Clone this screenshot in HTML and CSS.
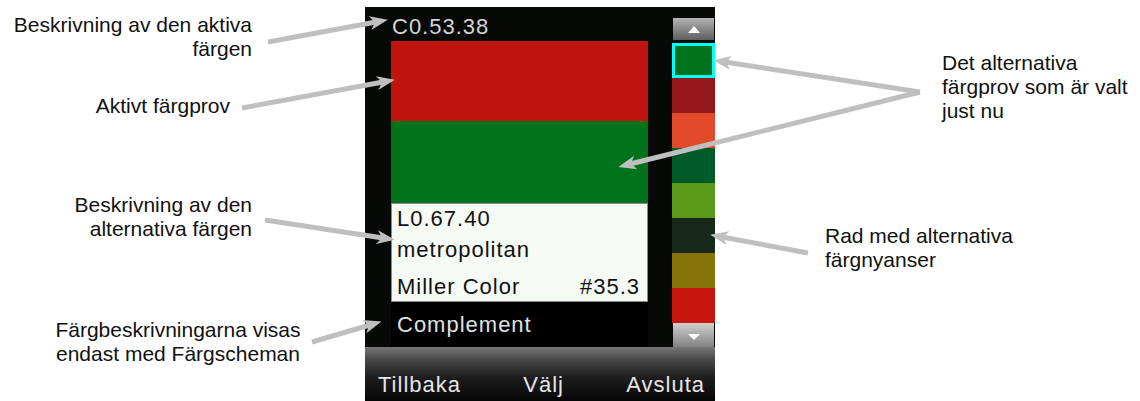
FILE: index.html
```html
<!DOCTYPE html>
<html lang="sv">
<head>
    <meta charset="UTF-8">
    <meta name="viewport" content="width=device-width, initial-scale=1.0">
    <title>Färgprov</title>
    <link rel="stylesheet" href="styles.css">
</head>
<body>

<div class="figure">
    <div class="note note-active">Beskrivning av den aktiva<br>färgen</div>
    <div class="note note-swatch">Aktivt färgprov</div>
    <div class="note note-alt">Beskrivning av den<br>alternativa färgen</div>
    <div class="note note-schemes">Färgbeskrivningarna visas<br>endast med Färgscheman</div>
    <div class="note note-selected">Det alternativa<br>färgprov som är valt<br>just nu</div>
    <div class="note note-row">Rad med alternativa<br>färgnyanser</div>

    <div class="device">
        <div class="screen">
            <div class="main">
                <div class="caption">C0.53.38</div>
                <div class="swatch swatch-active"></div>
                <div class="swatch swatch-alt"></div>
                <div class="info">
                    <div class="info-line">L0.67.40</div>
                    <div class="info-line second">metropolitan</div>
                    <div class="info-line last"><span>Miller Color</span><span>#35.3</span></div>
                </div>
                <div class="scheme">Complement</div>
            </div>
            <div class="strip">
                <div class="scroll scroll-up"><i></i></div>
                <div class="shades">
                    <div class="shade selected"></div>
                    <div class="shade dark-red"></div>
                    <div class="shade orange"></div>
                    <div class="shade dark-green"></div>
                    <div class="shade green"></div>
                    <div class="shade night"></div>
                    <div class="shade olive"></div>
                    <div class="shade red"></div>
                </div>
                <div class="scroll scroll-down"><i></i></div>
            </div>
        </div>
        <div class="softkeys">
            <span>Tillbaka</span>
            <span>Välj</span>
            <span>Avsluta</span>
        </div>
    </div>

    <!-- callout arrows -->
    <svg class="arrows" width="1140" height="401" viewBox="0 0 1140 401">
        <defs>
            <marker id="head" markerUnits="userSpaceOnUse" markerWidth="18" markerHeight="14" refX="6" refY="7" orient="auto">
                <path d="M0,0 L18,7 L0,14 L5,7 z" fill="#bfbfbf"/>
            </marker>
        </defs>
        <g stroke="#bfbfbf" stroke-width="5" marker-end="url(#head)">
            <line x1="268" y1="42" x2="376" y2="22"/>
            <line x1="242" y1="108" x2="383" y2="82"/>
            <line x1="920" y1="92" x2="725" y2="62"/>
            <line x1="920" y1="92" x2="630" y2="164"/>
            <line x1="265" y1="220" x2="383" y2="238"/>
            <line x1="312" y1="342" x2="370" y2="325"/>
            <line x1="808" y1="253" x2="722" y2="237"/>
        </g>
    </svg>
</div>

</body>
</html>
```

FILE: styles.css
```css
body {
    margin: 0;
    background-color: #fff;
    font-family: "Liberation Sans", Arial, sans-serif;
}

.figure {
    position: relative;
    width: 1140px;
    height: 401px;
    padding-top: 7px;
    box-sizing: border-box;
    overflow: hidden;
}

/* annotations */
.note {
    position: absolute;
    font-size: 21px;
    line-height: 24px;
    color: #111;
    white-space: nowrap;
}

.note-active {
    top: 13px;
    left: 0;
    width: 252px;
    text-align: right;
}

.note-swatch {
    top: 94px;
    left: 0;
    width: 230px;
    text-align: right;
}

.note-alt {
    top: 193px;
    left: 0;
    width: 252px;
    text-align: right;
}

.note-schemes {
    top: 318px;
    left: 28px;
    width: 300px;
    text-align: center;
}

.note-selected {
    top: 51px;
    left: 942px;
}

.note-row {
    top: 224px;
    left: 825px;
}

.arrows {
    position: absolute;
    top: 0;
    left: 0;
}

/* device screen */
.device {
    width: 350px;
    height: 394px;
    margin-left: 365px;
    background-color: #070907;
    font-family: "Liberation Sans", Arial, sans-serif;
    font-size: 22px;
    letter-spacing: 1px;
}

.screen {
    display: flex;
    height: 340px;
    padding-left: 26px;
}

.main {
    display: flex;
    flex-direction: column;
    width: 257px;
    margin-right: 24px;
}

.caption {
    height: 34px;
    box-sizing: border-box;
    padding: 5px 0 0 1px;
    line-height: 29px;
    color: #d4d4d4;
}

.swatch-active {
    height: 80px;
    background-color: #c0150f;
}

.swatch-alt {
    height: 82px;
    background-color: #00731a;
}

.info {
    display: flex;
    flex-direction: column;
    height: 99px;
    box-sizing: border-box;
    border: 1px solid #8a8a8a;
    padding: 0 7px 0 5px;
    background-color: #f5faf5;
    color: #111;
}

.info-line {
    line-height: 30px;
}

.info-line.second {
    line-height: 31px;
}

.info-line.last {
    display: flex;
    justify-content: space-between;
    margin-top: auto;
    line-height: 28px;
}

.scheme {
    height: 45px;
    padding-left: 6px;
    line-height: 45px;
    color: #e0e0e0;
    background-color: #000;
}

.strip {
    display: flex;
    flex-direction: column;
    width: 43px;
    padding-top: 11px;
}

.scroll {
    display: flex;
    justify-content: center;
    align-items: center;
    margin: 0 1px;
}

.scroll-up {
    height: 22px;
    margin-bottom: 3px;
    background: linear-gradient(#b4b4b4, #5e5e5e);
}

.scroll-down {
    height: 24px;
    background: linear-gradient(#cfcfcf, #828282);
}

.scroll i {
    width: 0;
    height: 0;
    border-left: 6px solid transparent;
    border-right: 6px solid transparent;
}

.scroll-up i {
    border-bottom: 7px solid #fff;
}

.scroll-down i {
    border-top: 6px solid #fff;
    margin-top: 4px;
}

.shade {
    height: 35px;
    box-sizing: border-box;
}

.shade.selected {
    border: 3px solid #00ffff;
    background-color: #00731a;
}

.shade.dark-red { background-color: #93161a; }
.shade.orange { background-color: #e04a2a; }
.shade.dark-green { background-color: #005a2a; }
.shade.green { background-color: #5c9a1a; }
.shade.night { background-color: #18281a; }
.shade.olive { background-color: #877408; }
.shade.red { background-color: #c8160f; }

.softkeys {
    display: flex;
    justify-content: space-between;
    align-items: flex-end;
    height: 54px;
    box-sizing: border-box;
    padding: 0 10px 3px 13px;
    line-height: 26px;
    color: #e6e6e6;
    background: linear-gradient(#777 0, #4a4a4a 12px, #1e1e1e 30px, #050505 54px);
}
```
